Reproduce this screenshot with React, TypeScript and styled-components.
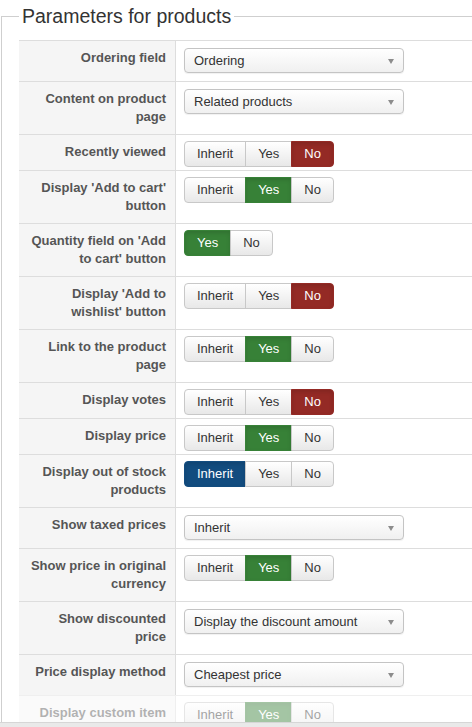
import React from "react";
import styled, { createGlobalStyle } from "styled-components";

const GlobalStyle = createGlobalStyle`
  html, body {
    margin: 0;
    padding: 0;
    overflow: hidden;
    background: #ffffff;
  }
  body {
    font-family: "Liberation Sans", Arial, sans-serif;
    font-size: 13px;
    color: #333;
  }
`;

const Page = styled.div`
  padding: 4px 0 0 1px;
  width: 560px;
`;

const Fieldset = styled.fieldset`
  margin: 0;
  padding: 12px 0 0 17px;
  border: 1px solid #cfcfcf;
  border-right: none;
  border-bottom: none;
  min-width: 0;
`;

const Legend = styled.legend`
  padding: 0 3px;
  margin-left: 0;
  font-size: 19.5px;
  line-height: 24px;
  color: #333;
  font-weight: normal;
`;

const Table = styled.div`
  display: flex;
  flex-direction: column;
`;

const Row = styled.div<{ $faded?: boolean }>`
  display: grid;
  grid-template-columns: 157px 1fr;
  border-top: 1px solid #dddddd;
  opacity: ${(p) => (p.$faded ? 0.45 : 1)};
`;

const Label = styled.div`
  background: #f5f5f5;
  border-right: 1px solid #dddddd;
  padding: 8px 9px 8px 8px;
  text-align: right;
  font-weight: bold;
  font-size: 13px;
  line-height: 18px;
  color: #555;
`;

const Control = styled.div<{ $kind: "select" | "toggle" }>`
  padding: ${(p) => (p.$kind === "select" ? "7px 8px 8px" : "6px 8px 3px")};
`;

const SelectBox = styled.div`
  position: relative;
  box-sizing: border-box;
  width: 220px;
  height: 25px;
  border: 1px solid #c4c4c4;
  border-radius: 4px;
  background: linear-gradient(#ffffff, #f0f0f0);
  box-shadow: 0 1px 1px rgba(0, 0, 0, 0.06);
  padding: 0 24px 0 9px;
  line-height: 23px;
  font-size: 13px;
  color: #333;
  white-space: nowrap;
`;

const Arrow = styled.span`
  position: absolute;
  right: 9px;
  top: 10px;
  width: 0;
  height: 0;
  border-left: 3.5px solid transparent;
  border-right: 3.5px solid transparent;
  border-top: 5px solid #8c8c8c;
`;

const Group = styled.div`
  display: inline-flex;
`;

type Tone = "red" | "green" | "blue" | undefined;

const toneBg: Record<string, string> = {
  red: "#942a25",
  green: "#378137",
  blue: "#124c7f",
};

const ToggleBtn = styled.span<{ $tone?: Tone }>`
  display: inline-block;
  padding: 3px 12px 3px;
  font-size: 13px;
  line-height: 18px;
  border: 1px solid #c8c8c8;
  border-bottom-color: #b5b5b5;
  margin-left: -1px;
  color: ${(p) => (p.$tone ? "#ffffff" : "#333333")};
  background: ${(p) =>
    p.$tone ? toneBg[p.$tone] : "linear-gradient(#ffffff, #e8e8e8)"};
  border-color: ${(p) => (p.$tone ? toneBg[p.$tone] : "#c8c8c8")};
  box-shadow: ${(p) =>
    p.$tone ? "inset 0 2px 4px rgba(0,0,0,0.12)" : "inset 0 1px 0 rgba(255,255,255,0.2)"};
  &:first-child {
    margin-left: 0;
    border-radius: 4px 0 0 4px;
  }
  &:last-child {
    border-radius: 0 4px 4px 0;
  }
`;

const BottomBar = styled.div`
  position: fixed;
  left: 0;
  right: 0;
  bottom: 0;
  height: 4px;
  background: #e9e9e9;
  border-top: 1px solid #d6d6d6;
`;

type Field =
  | { label: string; select: string }
  | { label: string; options: string[]; active: string; tone: Tone };

const tri = ["Inherit", "Yes", "No"];

const fields: Field[] = [
  { label: "Ordering field", select: "Ordering" },
  { label: "Content on product page", select: "Related products" },
  { label: "Recently viewed", options: tri, active: "No", tone: "red" },
  { label: "Display 'Add to cart' button", options: tri, active: "Yes", tone: "green" },
  { label: "Quantity field on 'Add to cart' button", options: ["Yes", "No"], active: "Yes", tone: "green" },
  { label: "Display 'Add to wishlist' button", options: tri, active: "No", tone: "red" },
  { label: "Link to the product page", options: tri, active: "Yes", tone: "green" },
  { label: "Display votes", options: tri, active: "No", tone: "red" },
  { label: "Display price", options: tri, active: "Yes", tone: "green" },
  { label: "Display out of stock products", options: tri, active: "Inherit", tone: "blue" },
  { label: "Show taxed prices", select: "Inherit" },
  { label: "Show price in original currency", options: tri, active: "Yes", tone: "green" },
  { label: "Show discounted price", select: "Display the discount amount" },
  { label: "Price display method", select: "Cheapest price" },
  { label: "Display custom item", options: tri, active: "Yes", tone: "green" },
];

export default function App() {
  return (
    <Page>
      <GlobalStyle />
      <Fieldset>
        <Legend>Parameters for products</Legend>
        <Table>
          {fields.map((f, i) => (
            <Row key={f.label} $faded={i === fields.length - 1}>
              <Label>{f.label}</Label>
              {"select" in f ? (
                <Control $kind="select">
                  <SelectBox>
                    {f.select}
                    <Arrow />
                  </SelectBox>
                </Control>
              ) : (
                <Control $kind="toggle">
                  <Group>
                    {f.options.map((o) => (
                      <ToggleBtn key={o} $tone={o === f.active ? f.tone : undefined}>
                        {o}
                      </ToggleBtn>
                    ))}
                  </Group>
                </Control>
              )}
            </Row>
          ))}
        </Table>
      </Fieldset>
      <BottomBar />
    </Page>
  );
}
